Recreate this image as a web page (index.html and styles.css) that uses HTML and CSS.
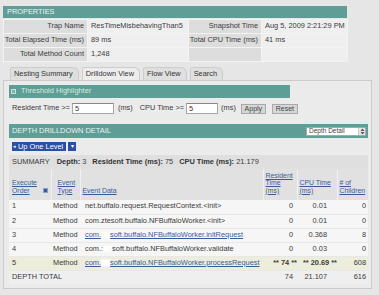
FILE: index.html
```html
<!DOCTYPE html>
<html>
<head>
<meta charset="utf-8">
<link rel="stylesheet" href="styles.css">
</head>
<body>
<div class="props">
  <div class="props-head">PROPERTIES</div>
  <table class="props-table">
    <colgroup><col class="pc1"><col class="pc2"><col class="pc3"><col class="pc4"></colgroup>
    <tr><th>Trap Name</th><td>ResTimeMisbehavingThan5</td><th>Snapshot Time</th><td>Aug 5, 2009 2:21:29 PM</td></tr>
    <tr><th>Total Elapsed Time (ms)</th><td>89 ms</td><th>Total CPU Time (ms)</th><td>41 ms</td></tr>
    <tr><th>Total Method Count</th><td>1,248</td><th></th><td></td></tr>
  </table>
</div>

<div class="tabs">
  <span class="tab">Nesting Summary</span>
  <span class="tab active">Drilldown View</span>
  <span class="tab">Flow View</span>
  <span class="tab">Search</span>
</div>

<div class="panel">
  <div class="thresh-head"><span class="thresh-icon"></span>Threshold Highlighter</div>
  <div class="thresh-row">
    <span>Resident Time &gt;=</span>
    <input class="inp inp-wide" type="text" value="5">
    <span class="ms">(ms)</span>
    <span>CPU Time &gt;=</span>
    <input class="inp inp-narrow" type="text" value="5">
    <span class="ms ms2">(ms)</span>
    <button class="btn">Apply</button>
    <button class="btn btn-reset">Reset</button>
  </div>

  <div class="detail-head">
    <span>DEPTH DRILLDOWN DETAIL</span>
    <span class="select"><span>Depth Detail</span><span class="sel-arrow"><svg width="5" height="7" viewBox="0 0 5 7"><path d="M2.5 0.5 L4.5 3 H0.5 Z M2.5 6.5 L0.5 4 H4.5 Z" fill="#555"/></svg></span></span>
  </div>

  <div class="uprow">
    <span class="upbtn"><span class="uparrow">&#9666;</span>Up One Level</span><span class="updrop">&#9662;</span>
  </div>

  <div class="summary">
    <span class="sum-lbl">SUMMARY</span>
    <b>Depth:</b>&nbsp;3
    <b class="sp">Resident Time (ms):</b>&nbsp;75
    <b class="sp">CPU Time (ms):</b>&nbsp;21.179
  </div>

  <table class="dt">
    <colgroup><col class="dc1"><col class="dc2"><col class="dc3"><col class="dc4"><col class="dc5"><col class="dc6"></colgroup>
    <thead>
      <tr>
        <th class="h-order"><a>Execute<br>Order</a><span class="sort"></span></th>
        <th class="h-type"><a>Event<br>Type</a></th>
        <th><a>Event Data</a></th>
        <th><a>Resident<br>Time<br>(ms)</a></th>
        <th><a>CPU Time<br>(ms)</a></th>
        <th><a># of<br>Children</a></th>
      </tr>
    </thead>
    <tbody>
      <tr><td>1</td><td>Method</td><td>net.buffalo.request.RequestContext.&lt;init&gt;</td><td class="n n1">0</td><td class="n n2">0.01</td><td class="n n3">0</td></tr>
      <tr><td>2</td><td>Method</td><td>com.ztesoft.buffalo.NFBuffaloWorker.&lt;init&gt;</td><td class="n n1">0</td><td class="n n2">0.01</td><td class="n n3">0</td></tr>
      <tr><td>3</td><td>Method</td><td><a>com.<span class="blur"></span>soft.buffalo.NFBuffaloWorker.initRequest</a></td><td class="n n1">0</td><td class="n n2">0.368</td><td class="n n3">8</td></tr>
      <tr><td>4</td><td>Method</td><td>com.:<span class="blur"></span>soft.buffalo.NFBuffaloWorker.validate</td><td class="n n1">0</td><td class="n n2">0.03</td><td class="n n3">0</td></tr>
      <tr class="hot"><td>5</td><td>Method</td><td><a>com.<span class="blur"></span>soft.buffalo.NFBuffaloWorker.processRequest</a></td><td class="n n1 star"><b>** 74 **</b></td><td class="n n2 star"><b>** 20.69 **</b></td><td class="n n3">608</td></tr>
      <tr class="total"><td colspan="3">DEPTH TOTAL</td><td class="n n1">74</td><td class="n n2">21.107</td><td class="n n3">616</td></tr>
    </tbody>
  </table>
</div>
</body>
</html>
```

FILE: styles.css
```css
* { box-sizing: border-box; }

body {
  margin: 0;
  width: 379px;
  height: 295px;
  overflow: hidden;
  background: #e6e6e6;
  font: 7.4px/1.2 "Liberation Sans", Arial, sans-serif;
  color: #3a3a3a;
}

/* ---------- properties ---------- */
.props {
  margin: 6px 0 0 3px;
  width: 344px;
}
.props-head {
  height: 12px;
  line-height: 12px;
  background: #5f9d97;
  color: #eef6f4;
  padding-left: 4px;
}
.props-table {
  width: 344px;
  border-collapse: collapse;
  table-layout: fixed;
  margin-top: 1px;
}
.pc1 { width: 84px; }
.pc2 { width: 101px; }
.pc3 { width: 73px; }
.pc4 { width: 86px; }
.props-table th,
.props-table td {
  height: 14px;
  padding: 0;
  border: 1px solid #f3f3f3;
  white-space: nowrap;
  overflow: hidden;
}
.props-table th {
  font-weight: normal;
  text-align: right;
  background: #dddddd;
  padding-right: 3px;
}
.props-table td {
  background: #efefef;
  padding-left: 3px;
}

/* ---------- tabs ---------- */
.tabs {
  display: flex;
  gap: 3px;
  margin: 5px 0 0 10px;
  height: 13px;
}
.tab {
  height: 13px;
  line-height: 12px;
  padding: 0 5px 0 3px;
  border: 1px solid #cdcdcd;
  border-bottom: none;
  border-radius: 2px 6px 0 0;
  background: #dfdfdf;
  color: #333;
}
.tab.active {
  background: #ededed;
}

/* ---------- panel ---------- */
.panel {
  margin: 0 7px 0 3px;
  border: 1px solid #cbcbcb;
  background: #ebebeb;
  padding: 4px 3px 4px 5px;
}
.thresh-head {
  width: 281px;
  height: 13px;
  background: #5f9d97;
  color: #d4eedc;
  display: flex;
  align-items: center;
  gap: 5px;
  padding-left: 2px;
}
.thresh-icon {
  width: 5px;
  height: 5px;
  border: 1px solid #c5e4d6;
  background: #7fb3ad;
}
.thresh-row {
  display: flex;
  align-items: center;
  height: 15px;
  margin-top: 3px;
  padding-left: 3px;
}
.inp {
  height: 11px;
  margin: 0 0 0 2px;
  padding: 0 2px;
  border: 1px solid #a6a6a6;
  border-top-color: #888;
  background: #fff;
  font: inherit;
  color: #333;
  outline: none;
}
.inp-wide { width: 42px; }
.inp-narrow { width: 32px; }
.ms { margin: 0 7px 0 4px; }
.ms2 { margin: 0 5px 0 3px; }
.btn {
  width: 25px;
  height: 10px;
  padding: 0;
  margin: 0 6px 0 0;
  border: 1px solid #a9a9a9;
  background: #d7d7d7;
  font: inherit;
  font-size: 7px;
  line-height: 8px;
  color: #444;
}
.btn-reset { width: 26px; }

.detail-head {
  margin-top: 8px;
  height: 14px;
  background: #5f9d97;
  color: #e8f3f0;
  display: flex;
  align-items: center;
  justify-content: space-between;
  padding: 0 2px 0 3px;
}
.select {
  width: 60px;
  height: 9px;
  background: #fff;
  border: 1px solid #a8a8a8;
  display: flex;
  align-items: center;
  justify-content: space-between;
  padding-left: 2px;
  font-size: 6.5px;
  color: #444;
}
.sel-arrow {
  width: 7px;
  height: 7px;
  display: flex;
  align-items: center;
  justify-content: center;
  background: #e8e8e8;
  border-left: 1px solid #c8c8c8;
}

.uprow {
  height: 17px;
  display: flex;
  align-items: center;
  padding-left: 3px;
}
.upbtn {
  height: 9px;
  line-height: 9px;
  background: #2c4fa3;
  color: #fff;
  padding: 0 3px 0 1px;
  display: inline-flex;
  align-items: center;
}
.uparrow {
  font-size: 5px;
  margin-right: 2px;
}
.updrop {
  height: 9px;
  width: 8px;
  line-height: 9px;
  margin-left: 2px;
  background: #2c4fa3;
  color: #fff;
  font-size: 6px;
  text-align: center;
}

.summary {
  height: 14px;
  line-height: 14px;
  background: #dfdfdf;
  padding-left: 3px;
  white-space: nowrap;
}
.sum-lbl { margin-right: 5px; }
.sp { margin-left: 4px; }
.summary b { font-weight: bold; color: #333; }

/* ---------- drilldown table ---------- */
.dt {
  width: 359px;
  border-collapse: collapse;
  table-layout: fixed;
}
.dc1 { width: 42px; }
.dc2 { width: 29px; }
.dc3 { width: 183px; }
.dc4 { width: 34px; }
.dc5 { width: 40px; }
.dc6 { width: 31px; }

.dt a {
  color: #3a5b9b;
  text-decoration: underline;
}
.dt th {
  height: 31px;
  background: #e1e1e1;
  font-weight: normal;
  font-size: 6.9px;
  text-align: left;
  vertical-align: bottom;
  line-height: 7.5px;
  padding: 1px 2px 6px 2px;
  border-left: 1px solid #f1f1f1;
}
.dt th:first-child { border-left: none; padding-left: 3px; }
.dt th.h-type { padding-left: 6px; }
.h-order { position: relative; }
.sort {
  position: absolute;
  right: 3px;
  bottom: 7px;
  width: 5px;
  height: 5px;
  background: #3a5b9b;
  border: 1px solid #8aa0c8;
}
.dt td {
  height: 14px;
  padding: 0 2px;
  background: #f6f6f6;
  border-bottom: 1px solid #e8e8e8;
  white-space: nowrap;
  overflow: hidden;
}
.dt td:first-child { padding-left: 3px; }
.dt td:nth-child(3) { padding-left: 5px; }
.dt td.n { text-align: right; }
.dt td.n1 { padding-right: 4px; }
.dt td.n2 { padding-right: 10px; }
.dt td.n3 { padding-right: 2px; }
.dt td.star { padding-right: 0; }
.dt tr.hot td { background: #ededdb; }
.dt tr.total td { background: #efefef; border-bottom: none; }
.dt tr.total td:first-child { padding-left: 3px; }
.blur {
  display: inline-block;
  width: 7px;
  height: 6px;
  margin: 0 1px;
  vertical-align: -1px;
  background: #fdfdfd;
  box-shadow: 0 0 1px 1px #f8f8f8;
}
```
